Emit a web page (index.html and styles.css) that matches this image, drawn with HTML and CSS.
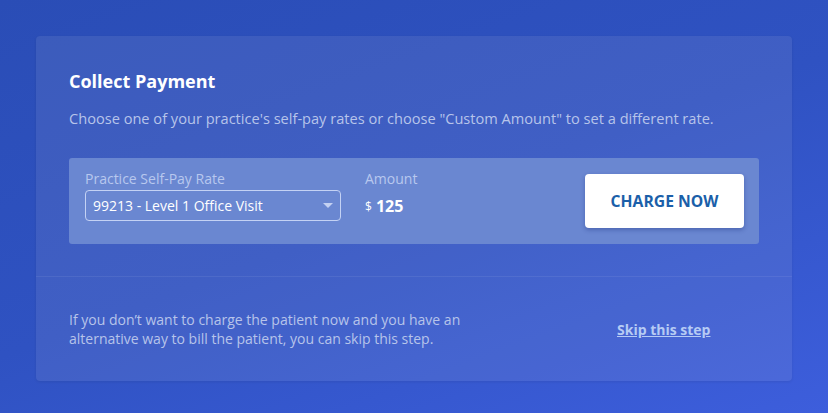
FILE: index.html
```html
<!DOCTYPE html>
<html lang="en">
<head>
    <meta charset="UTF-8">
    <meta name="viewport" content="width=device-width, initial-scale=1.0">
    <title>Collect Payment</title>
    <link rel="stylesheet" href="styles.css">
</head>
<body>
    <div class="payment-card">
        <div class="payment-main">
            <h2>Collect Payment</h2>
            <p class="intro">Choose one of your practice's self-pay rates or choose "Custom Amount" to set a different rate.</p>
            <div class="rate-panel">
                <div class="field">
                    <label for="rate">Practice Self-Pay Rate</label>
                    <div class="select-box">
                        <span id="rate">99213 - Level 1 Office Visit</span>
                        <span class="caret"></span>
                    </div>
                </div>
                <div class="field amount">
                    <label>Amount</label>
                    <div class="amount-value"><span class="currency">$</span> 125</div>
                </div>
                <button class="charge-btn">CHARGE NOW</button>
            </div>
        </div>
        <div class="payment-footer">
            <p>If you don’t want to charge the patient now and you have an alternative way to bill the patient, you can skip this step.</p>
            <a href="#" class="skip-link">Skip this step</a>
        </div>
    </div>
</body>
</html>
```

FILE: styles.css
```css
html, body {
    height: 100%;
}
body {
    font-family: 'Open Sans', sans-serif;
    margin: 0;
    padding: 36px;
    box-sizing: border-box;
    background: linear-gradient(160deg, #2a4db6 0%, #2f52c2 50%, #3d5edc 100%);
    color: #fff;
}
.payment-card {
    background: rgba(215, 215, 225, 0.1);
    border-radius: 4px;
    box-shadow: 0 1px 3px rgba(0, 0, 0, 0.08);
}
.payment-main {
    padding: 33px 33px 32px;
    border-bottom: 1px solid rgba(255, 255, 255, 0.07);
}
h2 {
    margin: 0;
    font-size: 18px;
    font-weight: 700;
    line-height: 24px;
}
.intro {
    margin: 15px 0 30px;
    font-size: 14.6px;
    line-height: 20px;
    color: #b7c4ea;
}
.rate-panel {
    display: flex;
    align-items: flex-start;
    background: #6a87d1;
    border-radius: 3px;
    padding: 11px 15px 0 16px;
    height: 75px;
}
.field {
    display: flex;
    flex-direction: column;
}
.field label {
    font-size: 14px;
    line-height: 20px;
    color: #b8c8ee;
    margin-bottom: 1px;
}
.select-box {
    height: 29px;
    border: 1px solid #c4d2f4;
    border-radius: 4px;
    display: flex;
    align-items: center;
    justify-content: space-between;
    padding: 0 7px 0 7px;
    width: 240px;
    font-size: 14px;
}
.caret {
    width: 0;
    height: 0;
    border-left: 5px solid transparent;
    border-right: 5px solid transparent;
    border-top: 5px solid #c4d1f2;
}
.amount {
    margin-left: 24px;
}
.amount-value {
    height: 31px;
    display: flex;
    align-items: center;
    font-size: 16px;
    font-weight: 700;
    gap: 4px;
}
.currency {
    font-size: 12px;
    font-weight: 400;
    padding-top: 2px;
}
.charge-btn {
    align-self: center;
    margin: -11px 0 0 auto;
    width: 159px;
    height: 54px;
    background: #fff;
    border: none;
    border-radius: 4px;
    box-shadow: 0 2px 4px rgba(20, 40, 120, 0.35);
    font-family: 'Open Sans', sans-serif;
    font-size: 15.7px;
    font-weight: 700;
    color: #1b5fa9;
    cursor: pointer;
}
.payment-footer {
    display: flex;
    align-items: center;
    padding: 31px 33px 31px;
    height: 42px;
}
.payment-footer p {
    margin: 0;
    width: 420px;
    font-size: 14px;
    line-height: 19px;
    color: #b7c4ea;
}
.skip-link {
    margin-left: 128px;
    font-size: 14px;
    font-weight: 700;
    color: #b6cbf4;
}
```
